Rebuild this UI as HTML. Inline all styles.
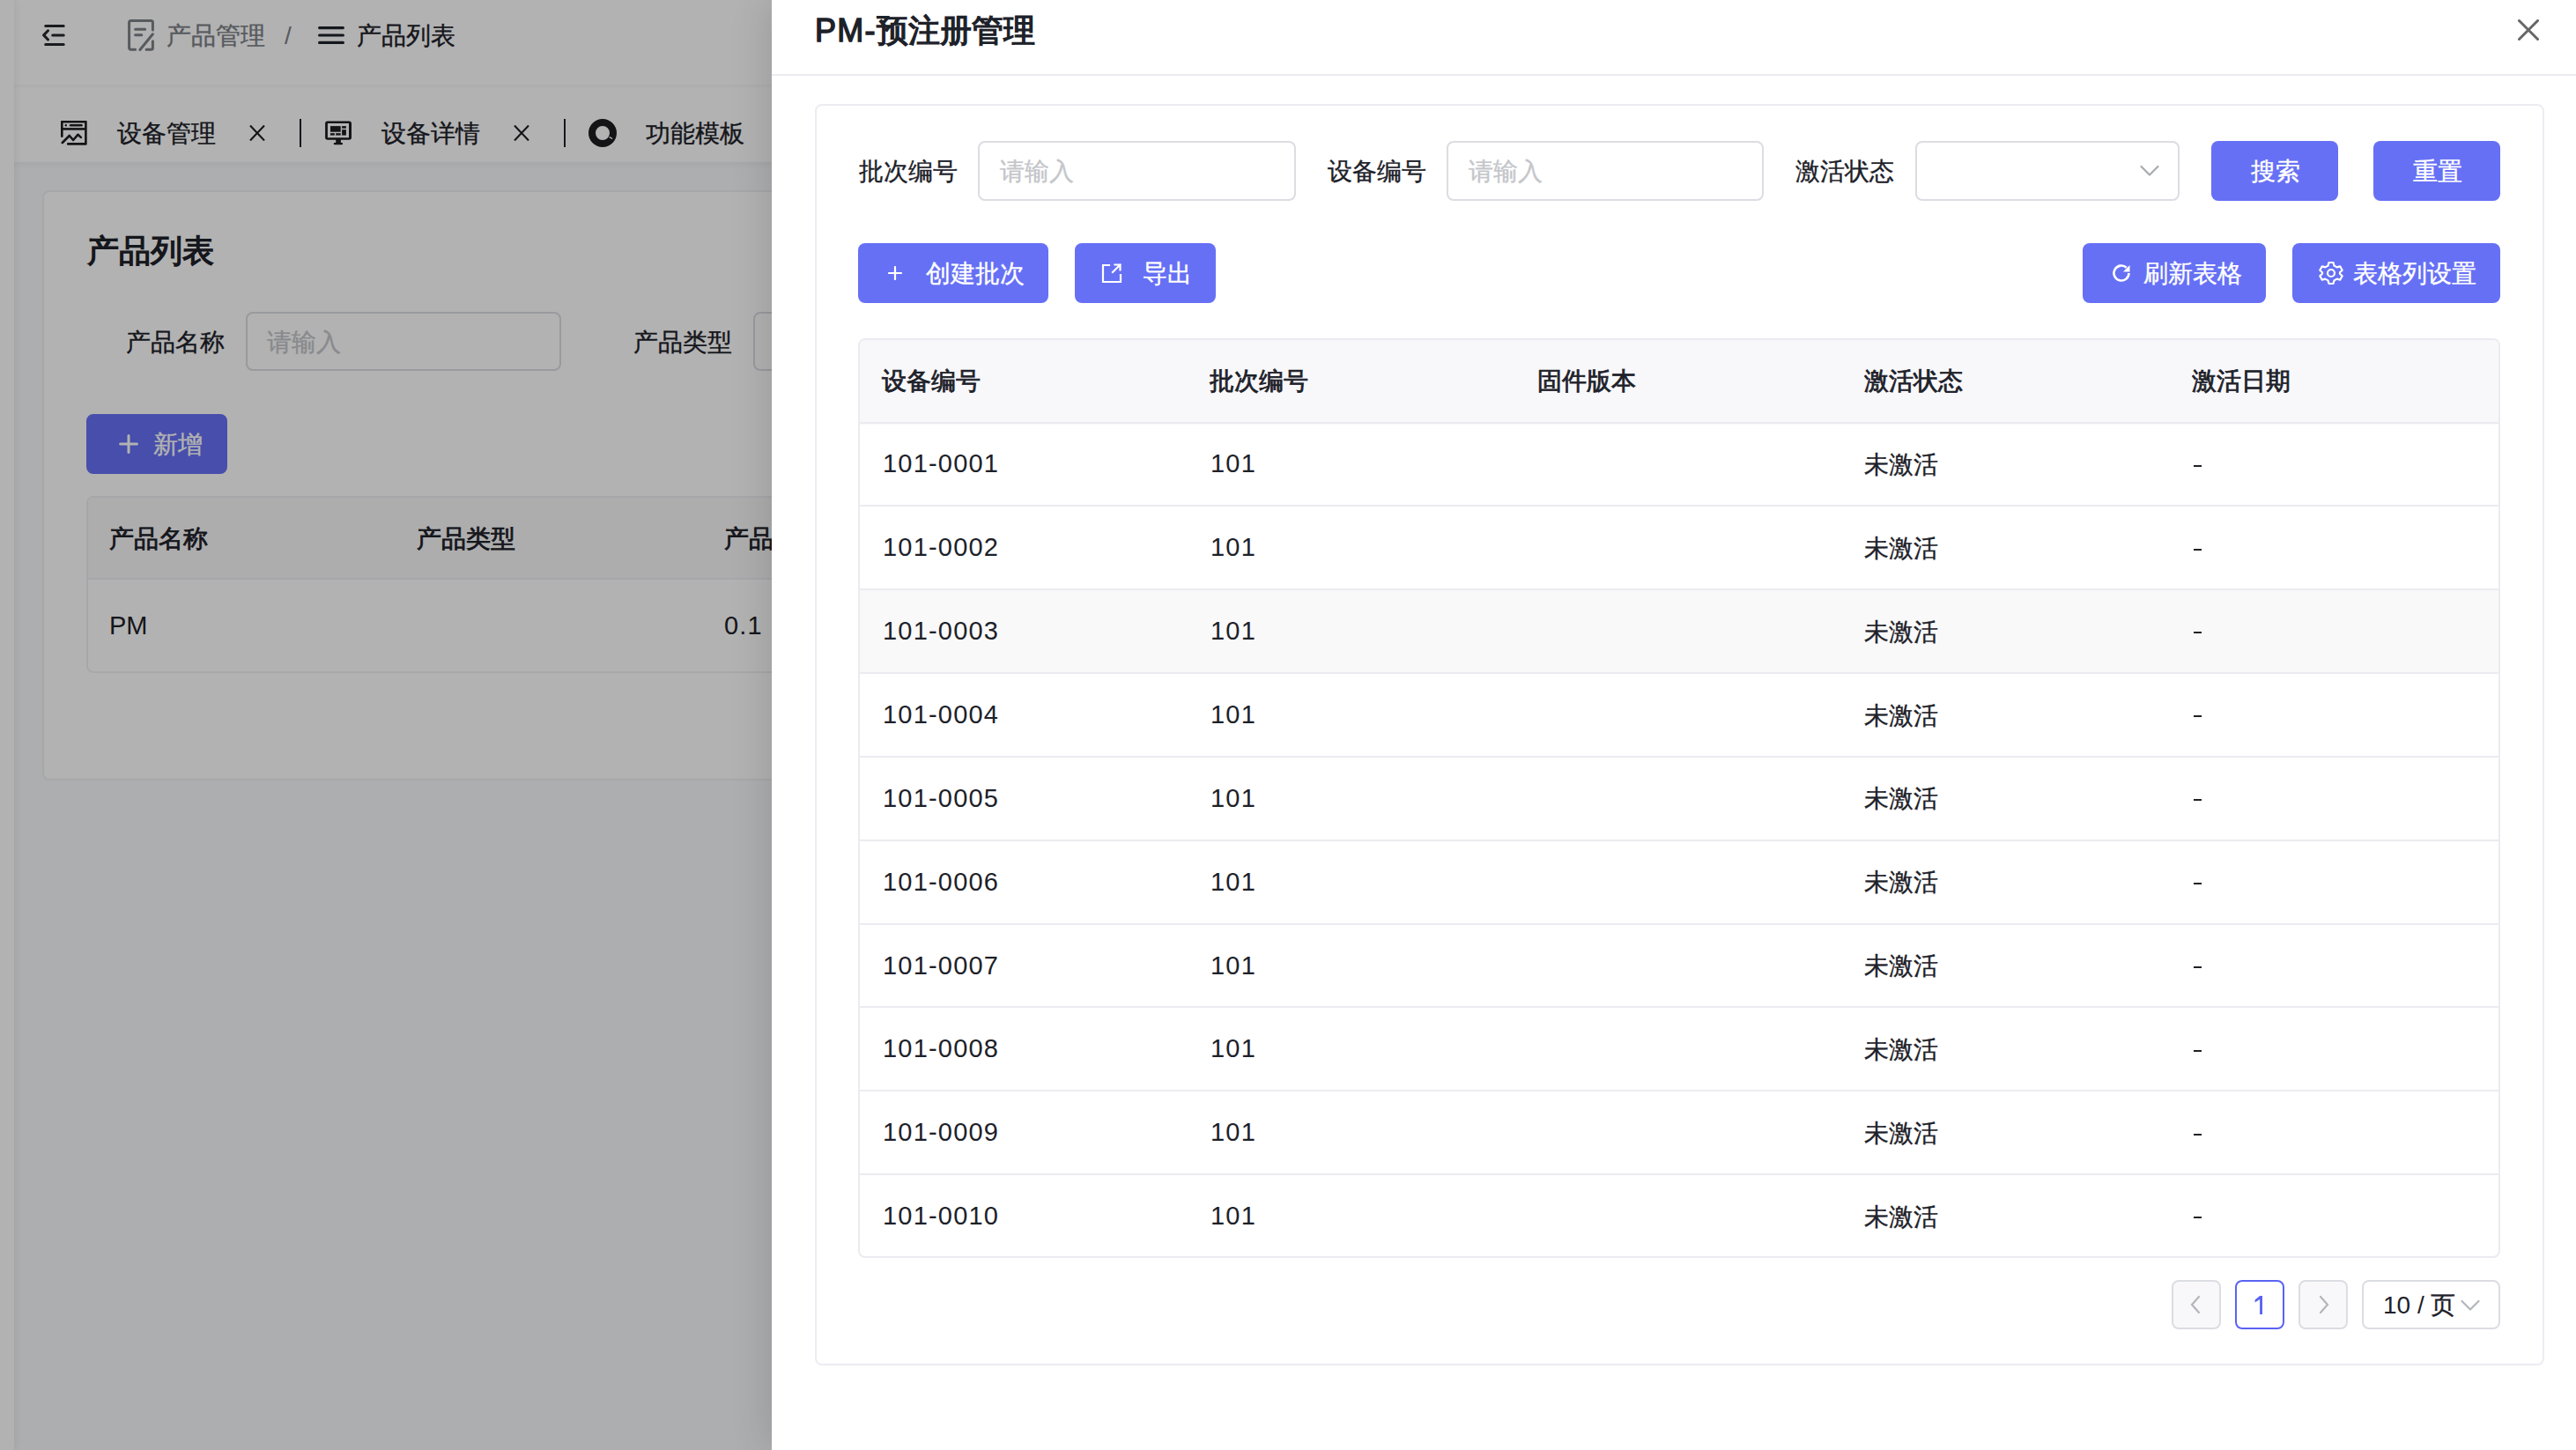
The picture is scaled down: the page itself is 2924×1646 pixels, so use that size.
<!DOCTYPE html>
<html><head><meta charset="utf-8">
<style>
*{box-sizing:border-box;margin:0;padding:0}
html,body{width:2924px;height:1646px;overflow:hidden}
body{font-family:"Liberation Sans",sans-serif;background:#f8f9fb;position:relative;color:#1d2129}
.abs{position:absolute}
.t{position:absolute;white-space:nowrap;line-height:1;font-size:28px}
.s{-webkit-text-stroke:0.35px currentColor}
.num{font-size:29px;letter-spacing:1.2px}
.inp{position:absolute;border:2px solid #dcdde2;border-radius:8px;background:#fff}
.ph{color:#c4c6ca}
.btn{position:absolute;background:#6670f5;border-radius:8px}
.w{color:#fff}
.line{position:absolute;background:#ebebf0}
.th{-webkit-text-stroke:0.8px currentColor}
.tt{-webkit-text-stroke:1.4px currentColor;font-size:36px}
</style></head><body>
<div class="abs" style="left:0;top:0;width:16px;height:1646px;background:#fff;box-shadow:2px 0 8px rgba(0,0,0,0.06);z-index:2"></div>
<div class="abs" style="left:16px;top:0;width:2908px;height:96px;background:#fff"></div>
<div class="abs" style="left:16px;top:96px;width:2908px;height:88px;background:#fff;box-shadow:inset 0 2px 4px rgba(0,0,0,0.04)"></div>
<div class="abs" style="left:16px;top:184px;width:2908px;height:8px;background:linear-gradient(rgba(0,0,0,0.035),rgba(0,0,0,0))"></div>
<svg class="abs" style="left:48px;top:28px" width="26" height="24" viewBox="0 0 26 24" fill="none" stroke="#24272c" stroke-width="3" stroke-linecap="round" stroke-linejoin="round"><path d="M3.7 1.5H24.2M11.7 11.9H24.2M3.7 22.5H24.2M6.5 6.8L1.6 11.9L6.5 17"/></svg>
<svg class="abs" style="left:145px;top:22px" width="30" height="36" viewBox="0 0 30 36" fill="none" stroke="#7d8187" stroke-width="3" stroke-linecap="round" stroke-linejoin="round"><path d="M8.6 34.2H3.6Q1.6 34.2 1.6 32.2V3.6Q1.6 1.6 3.6 1.6H26.4Q28.4 1.6 28.4 3.6V11.9M28.4 24.8V32.2Q28.4 34.2 26.4 34.2H21.1M8.6 11.2H19.7M8.6 17.8H15.8M13.9 34.5L28.4 16.8"/></svg>
<div class="t s" style="left:189px;top:27px;color:#7d8187">产品管理</div>
<div class="t" style="left:323px;top:27px;color:#7d8187">/</div>
<svg class="abs" style="left:361px;top:30px" width="30" height="20" viewBox="0 0 30 20" fill="none" stroke="#1d2129" stroke-width="3.2" stroke-linecap="round"><path d="M1.6 1.6H28.4M1.6 10H28.4M1.6 18.4H28.4"/></svg>
<div class="t s" style="left:405px;top:27px">产品列表</div>
<svg class="abs" style="left:69px;top:137px" width="30" height="28" viewBox="0 0 30 28" fill="none" stroke="#1d1e21" stroke-width="2.6" stroke-linejoin="round"><path d="M1.3 17.7V1.1H28.4V26.4H8.2" stroke-linecap="round"/><path d="M1.3 9.4H28.4"/><circle cx="5.8" cy="5.2" r="1.2" fill="#1d1e21" stroke="none"/><path d="M11 5.2H23.6" stroke-width="2.4" stroke-linecap="round"/><path d="M1.8 25L9.8 17L14.1 22L19.4 15.8L22.8 18.9" stroke-linecap="round"/></svg>
<div class="t s" style="left:133px;top:138px">设备管理</div>
<svg class="abs" style="left:283px;top:142px" width="18" height="18" viewBox="0 0 18 18" stroke="#1d1e21" stroke-width="2.1"><path d="M1 0.5L17 17.5M17 0.5L1 17.5"/></svg>
<div class="abs" style="left:340px;top:135px;width:2px;height:32px;background:#1d2129"></div>
<svg class="abs" style="left:369px;top:137px" width="30" height="28" viewBox="0 0 30 28" fill="#1d1e21"><path fill-rule="evenodd" d="M2.8 0.6H27.2Q30 0.6 30 3.4V19Q30 21.8 27.2 21.8H2.8Q0.1 21.8 0.1 19V3.4Q0.1 0.6 2.8 0.6ZM2.9 3V19.2H27V3Z"/><rect x="12.2" y="21" width="5.7" height="4.5"/><rect x="9.8" y="24.9" width="10.2" height="2.3" rx="0.8"/><rect x="6" y="6.1" width="11.7" height="6.6"/><rect x="19.1" y="6.1" width="4.8" height="2.6"/><rect x="19.1" y="10.2" width="4.8" height="6.4"/><rect x="6" y="14.2" width="4.8" height="2.4"/><rect x="12.2" y="14.2" width="5.5" height="2.4"/></svg>
<div class="t s" style="left:433px;top:138px">设备详情</div>
<svg class="abs" style="left:583px;top:142px" width="18" height="18" viewBox="0 0 18 18" stroke="#1d1e21" stroke-width="2.1"><path d="M1 0.5L17 17.5M17 0.5L1 17.5"/></svg>
<div class="abs" style="left:640px;top:135px;width:2px;height:32px;background:#1d2129"></div>
<svg class="abs" style="left:668px;top:135px" width="32" height="32" viewBox="0 0 32 32"><circle cx="16" cy="16" r="12" fill="none" stroke="#1d1e21" stroke-width="8"/><path d="M23.5 20.6Q25.5 21 27 22.6" stroke="#fff" stroke-width="1.3" fill="none"/></svg>
<div class="t s" style="left:733px;top:138px">功能模板</div>
<div class="abs" style="left:48px;top:216px;width:1401px;height:670px;background:#fff;border:2px solid #eeeff2;border-radius:8px"></div>
<div class="t tt" style="left:99px;top:267px">产品列表</div>
<div class="t s" style="left:143px;top:375px">产品名称</div>
<div class="inp" style="left:279px;top:354px;width:358px;height:67px"></div>
<div class="t ph s" style="left:303px;top:375px">请输入</div>
<div class="t s" style="left:719px;top:375px">产品类型</div>
<div class="inp" style="left:855px;top:354px;width:358px;height:67px"></div>
<div class="btn" style="left:98px;top:470px;width:160px;height:68px"></div>
<svg class="abs" style="left:135px;top:493px" width="22" height="22" viewBox="0 0 22 22" stroke="#fff" stroke-width="3" stroke-linecap="round"><path d="M11 1.6V20.4M1.6 11H20.4"/></svg>
<div class="t w s" style="left:174px;top:491px">新增</div>
<div class="abs" style="left:98px;top:563px;width:1340px;height:201px;border:2px solid #eeeff2;border-radius:8px;overflow:hidden"><div class="abs" style="left:0;top:0;width:100%;height:93px;background:#f8f8f9;border-bottom:2px solid #eeeff2"></div></div>
<div class="t th" style="left:124px;top:598px">产品名称</div>
<div class="t th" style="left:473px;top:598px">产品类型</div>
<div class="t th" style="left:822px;top:598px">产品版本</div>
<div class="t" style="left:124px;top:696px;font-size:29px">PM</div>
<div class="t num" style="left:822px;top:696px">0.1</div>
<div class="abs" style="left:0;top:0;width:2924px;height:1646px;background:rgba(0,0,0,0.3);z-index:5"></div>
<div class="abs" style="left:0;top:0;width:2924px;height:1646px;z-index:6">
<div class="abs" style="left:876px;top:0;width:2048px;height:1646px;background:#fff;box-shadow:-6px 0 40px rgba(0,0,0,0.12)"></div>
<div class="t tt" style="left:925px;top:17px"><span style="letter-spacing:1.3px">PM-</span>预注册管理</div>
<div class="line" style="left:876px;top:84px;width:2048px;height:2px"></div>
<svg class="abs" style="left:2858px;top:22px" width="24" height="24" viewBox="0 0 24 24" stroke="#666" stroke-width="3" stroke-linecap="round"><path d="M1.5 1.5L22.5 22.5M22.5 1.5L1.5 22.5"/></svg>
<div class="abs" style="left:925px;top:118px;width:1963px;height:1432px;border:2px solid #ececf2;border-radius:8px"></div>
<div class="t s" style="left:975px;top:181px">批次编号</div>
<div class="inp" style="left:1110px;top:160px;width:361px;height:68px"></div>
<div class="t ph s" style="left:1135px;top:181px">请输入</div>
<div class="t s" style="left:1507px;top:181px">设备编号</div>
<div class="inp" style="left:1642px;top:160px;width:360px;height:68px"></div>
<div class="t ph s" style="left:1667px;top:181px">请输入</div>
<div class="t s" style="left:2038px;top:181px">激活状态</div>
<div class="inp" style="left:2174px;top:160px;width:300px;height:68px"></div>
<svg class="abs" style="left:2429px;top:187px" width="22" height="14" viewBox="0 0 22 14" fill="none" stroke="#a9abb0" stroke-width="2.2" stroke-linecap="round" stroke-linejoin="round"><path d="M1.5 2L11 11.5L20.5 2"/></svg>
<div class="btn" style="left:2510px;top:160px;width:144px;height:68px"></div>
<div class="t w s" style="left:2555px;top:181px">搜索</div>
<div class="btn" style="left:2694px;top:160px;width:144px;height:68px"></div>
<div class="t w s" style="left:2739px;top:181px">重置</div>
<div class="btn" style="left:974px;top:276px;width:216px;height:68px"></div>
<svg class="abs" style="left:1008px;top:302px" width="16" height="16" viewBox="0 0 16 16" stroke="#fff" stroke-width="2.2" stroke-linecap="round"><path d="M8 1V15M1 8H15"/></svg>
<div class="t w s" style="left:1051px;top:297px">创建批次</div>
<div class="btn" style="left:1220px;top:276px;width:160px;height:68px"></div>
<svg class="abs" style="left:1250px;top:298px" width="24" height="24" viewBox="0 0 24 24" fill="none" stroke="#fff" stroke-width="2.2" stroke-linecap="square"><path d="M9 3H2V22H22V14M13 11L21.5 2.5M15.5 2.5H21.5V8.5"/></svg>
<div class="t w s" style="left:1297px;top:297px">导出</div>
<div class="btn" style="left:2364px;top:276px;width:208px;height:68px"></div>
<svg class="abs" style="left:2396px;top:298px" width="24" height="24" viewBox="0 0 24 24" fill="none" stroke="#fff" stroke-width="2.6"><path d="M20.5 12A8.5 8.5 0 1 1 17.8 5.8"/><path d="M21.5 3V10.5H14Z" fill="#fff" stroke="none"/></svg>
<div class="t w s" style="left:2433px;top:297px">刷新表格</div>
<div class="btn" style="left:2602px;top:276px;width:236px;height:68px"></div>
<svg class="abs" style="left:2632px;top:296px" width="28" height="28" viewBox="0 0 28 28" fill="none" stroke="#fff" stroke-width="2.2" stroke-linejoin="round"><path d="M11.5 2H16.5L17.5 5.6L20.6 7.4L24.2 6.4L26.7 10.7L24 13.3V14.7L26.7 17.3L24.2 21.6L20.6 20.6L17.5 22.4L16.5 26H11.5L10.5 22.4L7.4 20.6L3.8 21.6L1.3 17.3L4 14.7V13.3L1.3 10.7L3.8 6.4L7.4 7.4L10.5 5.6Z"/><circle cx="14" cy="14" r="4"/></svg>
<div class="t w s" style="left:2671px;top:297px">表格列设置</div>
<div class="abs" style="left:974px;top:384px;width:1864px;height:1044px;border:2px solid #ebebf0;border-radius:8px;overflow:hidden"><div class="abs" style="left:0;top:0;width:100%;height:95.5px;background:#f8f8fb"></div></div>
<div class="line" style="left:976px;top:478.5px;width:1860px;height:2px"></div>
<div class="t th" style="left:1001px;top:419px">设备编号</div>
<div class="t th" style="left:1373px;top:419px">批次编号</div>
<div class="t th" style="left:1745px;top:419px">固件版本</div>
<div class="t th" style="left:2116px;top:419px">激活状态</div>
<div class="t th" style="left:2488px;top:419px">激活日期</div>
<div class="line" style="left:976px;top:573.4px;width:1860px;height:2px"></div>
<div class="t num" style="left:1002px;top:512.4px">101-0001</div>
<div class="t num" style="left:1374px;top:512.4px">101</div>
<div class="t s" style="left:2116px;top:513.9px">未激活</div>
<div class="abs" style="left:2490px;top:528px;width:9px;height:2.4px;background:#1f2126"></div>
<div class="line" style="left:976px;top:668.2px;width:1860px;height:2px"></div>
<div class="t num" style="left:1002px;top:607.3px">101-0002</div>
<div class="t num" style="left:1374px;top:607.3px">101</div>
<div class="t s" style="left:2116px;top:608.8px">未激活</div>
<div class="abs" style="left:2490px;top:623px;width:9px;height:2.4px;background:#1f2126"></div>
<div class="abs" style="left:976px;top:670.2px;width:1860px;height:93.8px;background:#f9f9fa"></div>
<div class="line" style="left:976px;top:763.0px;width:1860px;height:2px"></div>
<div class="t num" style="left:1002px;top:702.1px">101-0003</div>
<div class="t num" style="left:1374px;top:702.1px">101</div>
<div class="t s" style="left:2116px;top:703.6px">未激活</div>
<div class="abs" style="left:2490px;top:717px;width:9px;height:2.4px;background:#1f2126"></div>
<div class="line" style="left:976px;top:857.9px;width:1860px;height:2px"></div>
<div class="t num" style="left:1002px;top:797.0px">101-0004</div>
<div class="t num" style="left:1374px;top:797.0px">101</div>
<div class="t s" style="left:2116px;top:798.5px">未激活</div>
<div class="abs" style="left:2490px;top:812px;width:9px;height:2.4px;background:#1f2126"></div>
<div class="line" style="left:976px;top:952.8px;width:1860px;height:2px"></div>
<div class="t num" style="left:1002px;top:891.8px">101-0005</div>
<div class="t num" style="left:1374px;top:891.8px">101</div>
<div class="t s" style="left:2116px;top:893.3px">未激活</div>
<div class="abs" style="left:2490px;top:907px;width:9px;height:2.4px;background:#1f2126"></div>
<div class="line" style="left:976px;top:1047.6px;width:1860px;height:2px"></div>
<div class="t num" style="left:1002px;top:986.7px">101-0006</div>
<div class="t num" style="left:1374px;top:986.7px">101</div>
<div class="t s" style="left:2116px;top:988.2px">未激活</div>
<div class="abs" style="left:2490px;top:1002px;width:9px;height:2.4px;background:#1f2126"></div>
<div class="line" style="left:976px;top:1142.4px;width:1860px;height:2px"></div>
<div class="t num" style="left:1002px;top:1081.5px">101-0007</div>
<div class="t num" style="left:1374px;top:1081.5px">101</div>
<div class="t s" style="left:2116px;top:1083.0px">未激活</div>
<div class="abs" style="left:2490px;top:1097px;width:9px;height:2.4px;background:#1f2126"></div>
<div class="line" style="left:976px;top:1237.3px;width:1860px;height:2px"></div>
<div class="t num" style="left:1002px;top:1176.4px">101-0008</div>
<div class="t num" style="left:1374px;top:1176.4px">101</div>
<div class="t s" style="left:2116px;top:1177.9px">未激活</div>
<div class="abs" style="left:2490px;top:1192px;width:9px;height:2.4px;background:#1f2126"></div>
<div class="line" style="left:976px;top:1332.2px;width:1860px;height:2px"></div>
<div class="t num" style="left:1002px;top:1271.2px">101-0009</div>
<div class="t num" style="left:1374px;top:1271.2px">101</div>
<div class="t s" style="left:2116px;top:1272.7px">未激活</div>
<div class="abs" style="left:2490px;top:1287px;width:9px;height:2.4px;background:#1f2126"></div>
<div class="t num" style="left:1002px;top:1366.1px">101-0010</div>
<div class="t num" style="left:1374px;top:1366.1px">101</div>
<div class="t s" style="left:2116px;top:1367.6px">未激活</div>
<div class="abs" style="left:2490px;top:1381px;width:9px;height:2.4px;background:#1f2126"></div>
<div class="abs" style="left:2465px;top:1453px;width:56px;height:56px;border:2px solid #dcdde2;border-radius:8px;background:#f8f8fb"></div>
<svg class="abs" style="left:2485px;top:1470px" width="14" height="22" viewBox="0 0 14 22" fill="none" stroke="#b4b6bb" stroke-width="2.2" stroke-linecap="round"><path d="M11 2L3 11L11 20"/></svg>
<div class="abs" style="left:2537px;top:1453px;width:56px;height:56px;border:2px solid #5a63f3;border-radius:8px;background:#fff"></div>
<svg class="abs" style="left:2557px;top:1471px" width="14" height="21" viewBox="0 0 14 21" fill="#5a63f3"><path d="M8.2 0H11V21H8.1V3.9L2.6 7.6V4.6Z"/></svg>
<div class="abs" style="left:2609px;top:1453px;width:56px;height:56px;border:2px solid #dcdde2;border-radius:8px;background:#f8f8fb"></div>
<svg class="abs" style="left:2631px;top:1470px" width="14" height="22" viewBox="0 0 14 22" fill="none" stroke="#b4b6bb" stroke-width="2.2" stroke-linecap="round"><path d="M3 2L11 11L3 20"/></svg>
<div class="abs" style="left:2681px;top:1453px;width:157px;height:56px;border:2px solid #dcdde2;border-radius:8px;background:#fff"></div>
<div class="t" style="left:2705px;top:1468px;font-size:28px">10 / <span class="s">页</span></div>
<svg class="abs" style="left:2793px;top:1475px" width="22" height="14" viewBox="0 0 22 14" fill="none" stroke="#b4b6bb" stroke-width="2.2" stroke-linecap="round" stroke-linejoin="round"><path d="M1.5 2L11 11.5L20.5 2"/></svg>
</div>
</body></html>
